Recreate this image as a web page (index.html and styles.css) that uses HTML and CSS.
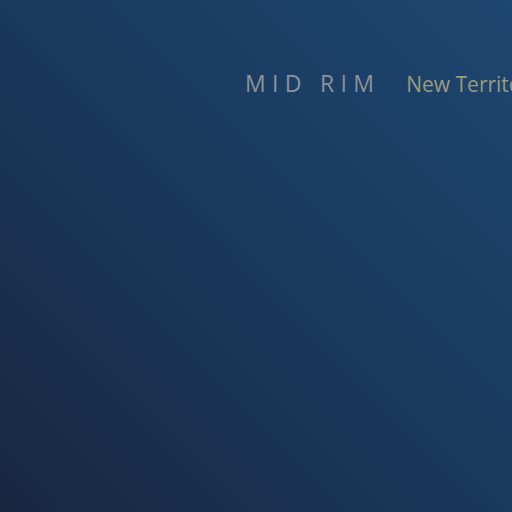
FILE: index.html
```html
<!DOCTYPE html>
<html>
<head>
<meta charset="utf-8">
<link rel="stylesheet" href="styles.css">
</head>
<body>
<div class="page">
  <header class="top">
    <span class="brand">MID RIM</span>
    <span class="place">New Territories</span>
  </header>
</div>
</body>
</html>
```
FILE: styles.css
```css
html, body {
  margin: 0;
  padding: 0;
  width: 512px;
  height: 512px;
  overflow: hidden;
}
.page {
  width: 512px;
  height: 512px;
  overflow: hidden;
  background: linear-gradient(to top right, #182740 0%, #1a3a5e 55%, #1d4670 100%);
  font-family: "Open Sans", "DejaVu Sans", sans-serif;
}
.top {
  display: flex;
  align-items: baseline;
  padding: 67px 0 0 245px;
  white-space: nowrap;
  overflow: hidden;
}
.brand {
  color: #8c929b;
  font-size: 23px;
  letter-spacing: 6.3px;
  font-weight: 400;
}
.place {
  margin-left: 26px;
  color: #9c9a7c;
  font-size: 21px;
}
```
